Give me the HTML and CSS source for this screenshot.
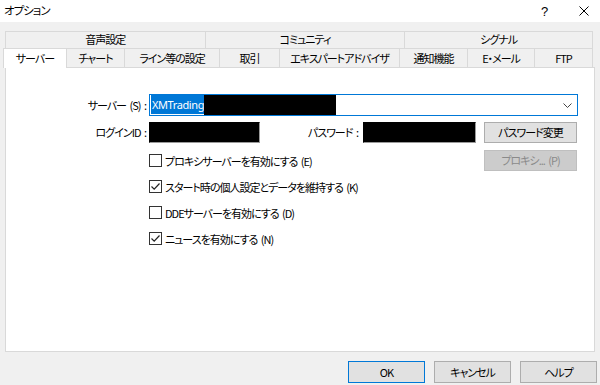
FILE: index.html
```html
<!DOCTYPE html>
<html lang="ja">
<head>
    <meta charset="UTF-8">
    <title>オプション</title>
    <link rel="stylesheet" href="styles.css">
</head>
<body>
    <div class="dialog">
        <header class="titlebar">
            <span class="title">オプション</span>
            <span class="help-mark">?</span>
            <span class="close">
                <svg width="10" height="10" viewBox="0 0 10 10"><path d="M0.5 0.5 L9.5 9.5 M9.5 0.5 L0.5 9.5" stroke="#000" stroke-width="1"/></svg>
            </span>
        </header>

        <div class="tabs">
            <div class="tab-row top">
                <div class="tab w200">音声設定</div>
                <div class="tab w200">コミュニティ</div>
                <div class="tab w188">シグナル</div>
            </div>
            <div class="tab-row bottom">
                <div class="tab active">サーバー</div>
                <div class="tab w58">チャート</div>
                <div class="tab w95">ライン等の設定</div>
                <div class="tab w60">取引</div>
                <div class="tab w120">エキスパートアドバイザ</div>
                <div class="tab w68">通知機能</div>
                <div class="tab w67">E・メール</div>
                <div class="tab w58">FTP</div>
            </div>
        </div>

        <section class="panel">
            <label class="field-label row1">サーバー (S) :</label>
            <div class="combo">
                <span class="selected-text">XMTrading</span><span class="redact wide"></span>
                <svg class="chevron" width="9" height="5" viewBox="0 0 9 5"><path d="M0.5 0.5 L4.5 4.5 L8.5 0.5" fill="none" stroke="#444" stroke-width="1"/></svg>
            </div>

            <label class="field-label row2">ログインID :</label>
            <div class="masked login"></div>
            <label class="field-label row2 pw-label">パスワード :</label>
            <div class="masked password"></div>
            <button class="btn side">パスワード変更</button>

            <div class="check row3"><span class="box"></span>プロキシサーバーを有効にする (E)</div>
            <button class="btn side disabled">プロキシ... (P)</button>
            <div class="check row4"><span class="box checked"><svg width="11" height="11" viewBox="0 0 11 11"><path d="M1.5 5.5 L4.2 8.2 L9.5 2.5" fill="none" stroke="#222" stroke-width="1.2"/></svg></span>スタート時の個人設定とデータを維持する (K)</div>
            <div class="check row5"><span class="box"></span>DDEサーバーを有効にする (D)</div>
            <div class="check row6"><span class="box checked"><svg width="11" height="11" viewBox="0 0 11 11"><path d="M1.5 5.5 L4.2 8.2 L9.5 2.5" fill="none" stroke="#222" stroke-width="1.2"/></svg></span>ニュースを有効にする (N)</div>
        </section>

        <footer class="actions">
            <button class="btn default">OK</button>
            <button class="btn">キャンセル</button>
            <button class="btn">ヘルプ</button>
        </footer>
    </div>
</body>
</html>
```

FILE: styles.css
```css
body {
    margin: 0;
    background-color: #f0f0f0;
    font-family: "Noto Sans CJK JP", "Noto Sans", sans-serif;
    font-size: 11px;
    letter-spacing: -1px;
    word-spacing: 2px;
    font-feature-settings: "palt";
    color: #000;
}

.dialog {
    width: 600px;
    height: 385px;
    overflow: hidden;
}

.titlebar {
    height: 22px;
    background-color: #fff;
    display: flex;
    align-items: center;
    padding-left: 4px;
}

.title {
    flex: 1;
    font-size: 11.5px;
    margin-top: -2px;
}

.help-mark {
    width: 12px;
    margin-right: 26px;
    font-family: "Liberation Sans", sans-serif;
    font-size: 13px;
    letter-spacing: 0;
}

.close {
    display: flex;
    margin-right: 11px;
}

.tabs {
    margin: 9px 7px 0 5px;
}

.tab-row {
    display: flex;
}

.tab {
    box-sizing: border-box;
    border: 1px solid #d9d9d9;
    border-bottom: none;
    margin-left: -1px;
    text-align: center;
    white-space: nowrap;
}

.tab-row.top .tab {
    height: 17px;
    line-height: 15px;
}

.tab-row.top .tab:first-child {
    margin-left: 0;
}

.tab-row.bottom .tab {
    height: 19px;
    line-height: 18px;
}

.tab-row.bottom .tab.active {
    width: 64px;
    height: 20px;
    margin-left: -2px;
    margin-bottom: -1px;
    background-color: #fff;
    position: relative;
    z-index: 1;
}

.w200 { width: 201px; }
.w188 { width: 189px; }
.w58 { width: 59px; }
.w95 { width: 96px; }
.w60 { width: 61px; }
.w120 { width: 121px; }
.w68 { width: 69px; }
.w67 { width: 68px; }

.panel {
    box-sizing: border-box;
    height: 285px;
    margin: 0 5px;
    background-color: #fff;
    border: 1px solid #d9d9d9;
    padding-top: 26px;
    display: grid;
    grid-template-columns: 143px 111px 103px 113px 101px;
    grid-template-rows: 28px 28px 26px 26px 26px 26px;
    align-content: start;
}

.field-label {
    text-align: right;
    padding-right: 3px;
    line-height: 21px;
    white-space: nowrap;
}

.field-label.row1 { grid-row: 1; grid-column: 1; line-height: 22px; }
.field-label.row2 { grid-row: 2; grid-column: 1; }
.field-label.pw-label { grid-column: 3; padding-right: 5px; }

.combo {
    grid-row: 1;
    grid-column: 2 / 6;
    height: 22px;
    width: 429px;
    box-sizing: border-box;
    border: 1px solid #0078d7;
    display: flex;
    align-items: stretch;
    padding: 0 1px;
}

.selected-text {
    display: inline-block;
    width: 53px;
    overflow: hidden;
    white-space: nowrap;
    background-color: #0078d7;
    color: #fff;
    font-family: "Noto Sans", sans-serif;
    font-size: 11px;
    letter-spacing: -0.4px;
    line-height: 19px;
    padding-left: 1px;
    box-sizing: border-box;
    margin: 0 0 1px 0;
}

.redact {
    display: inline-block;
    background-color: #000;
}

.redact.wide {
    width: 132px;
}

.chevron {
    margin-left: auto;
    align-self: center;
    margin-right: 4px;
}

.masked {
    grid-row: 2;
    height: 21px;
    box-sizing: border-box;
    background-color: #000;
    border: 1px solid #000;
    border-right-color: #9a9a9a;
    border-bottom-color: #9a9a9a;
}

.masked.login { grid-column: 2; width: 111px; }
.masked.password { grid-column: 4; width: 113px; }

.btn {
    box-sizing: border-box;
    width: 77px;
    height: 22px;
    padding: 0;
    background-color: #e1e1e1;
    border: 1px solid #adadad;
    font-family: inherit;
    font-size: 11px;
    letter-spacing: -1px;
    word-spacing: 2px;
    font-feature-settings: "palt";
    color: #000;
}

.btn.side {
    grid-column: 5;
    justify-self: end;
    width: 93px;
    height: 21px;
    line-height: 17px;
}

.panel > .btn.side:not(.disabled) { grid-row: 2; }

.btn.disabled {
    grid-row: 3;
    background-color: #cccccc;
    border-color: #bfbfbf;
    color: #8a8a8a;
}

.btn.default {
    border-color: #0078d7;
}

.check {
    grid-column: 2 / 5;
    display: flex;
    align-items: center;
    height: 21px;
    white-space: nowrap;
}

.check.row3 { grid-row: 3; }
.check.row4 { grid-row: 4; }
.check.row5 { grid-row: 5; }
.check.row6 { grid-row: 6; }

.box {
    box-sizing: border-box;
    width: 13px;
    height: 13px;
    border: 1px solid #333;
    background-color: #fff;
    margin-right: 3px;
    display: flex;
}

.actions {
    display: flex;
    justify-content: flex-end;
    gap: 9px;
    padding: 9px 3px 0 0;
}
```
